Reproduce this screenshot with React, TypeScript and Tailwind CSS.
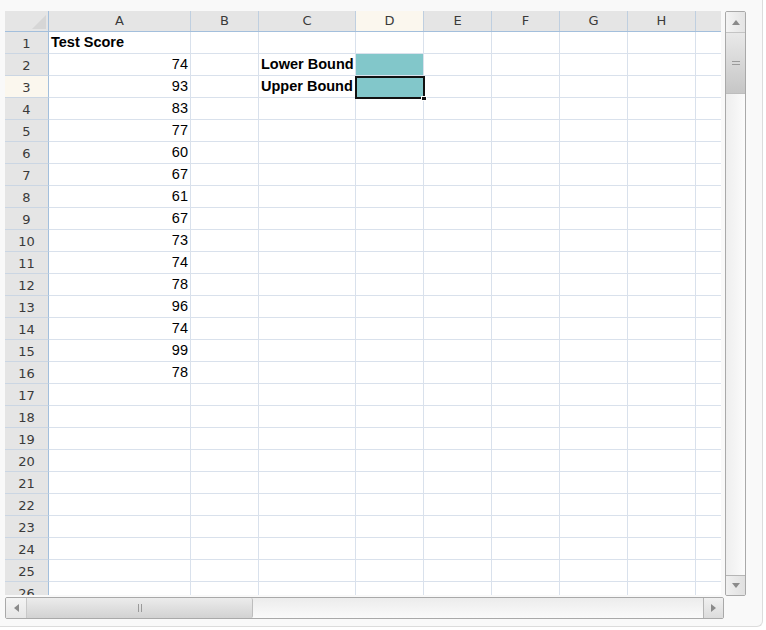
import React from "react";

const COLS = [
  { key: "A", w: "w-[142px]" },
  { key: "B", w: "w-[68px]" },
  { key: "C", w: "w-[97px]" },
  { key: "D", w: "w-[68px]" },
  { key: "E", w: "w-[68px]" },
  { key: "F", w: "w-[68px]" },
  { key: "G", w: "w-[68px]" },
  { key: "H", w: "w-[68px]" },
  { key: "I", w: "w-[68px]" },
];

const SCORES = [74, 93, 83, 77, 60, 67, 61, 67, 73, 74, 78, 96, 74, 99, 78];

type Cell = { text?: string; bold?: boolean; right?: boolean; fill?: boolean };

function cellFor(row: number, col: string): Cell {
  if (col === "A") {
    if (row === 1) return { text: "Test Score", bold: true };
    if (row >= 2 && row <= 16) return { text: String(SCORES[row - 2]), right: true };
  }
  if (col === "C") {
    if (row === 2) return { text: "Lower Bound", bold: true };
    if (row === 3) return { text: "Upper Bound", bold: true };
  }
  if (col === "D" && (row === 2 || row === 3)) return { fill: true };
  return {};
}

const ROWS = Array.from({ length: 26 }, (_, i) => i + 1);

function HeaderRow() {
  return (
    <div className="flex h-[21px] shrink-0 border-b border-[#a3bfdc]">
      <div className="relative w-[44px] shrink-0 border-r border-[#a3bfdc] bg-[#e5e5e5]">
        <svg className="absolute right-[2px] bottom-[2px]" width="14" height="14" viewBox="0 0 14 14">
          <path d="M14 0 L14 14 L0 14 Z" fill="#d6d6d6" />
        </svg>
      </div>
      {COLS.map((c) => (
        <div
          key={c.key}
          className={`${c.w} shrink-0 border-r border-[#bfcfe0] flex items-center justify-center text-[13px] text-[#3a3a3a] ${
            c.key === "D" ? "bg-[#fbf7ee]" : "bg-[#e5e5e5]"
          }`}
        >
          {c.key}
        </div>
      ))}
    </div>
  );
}

function GridRow({ row }: { row: number }) {
  return (
    <div className="flex h-[22px] shrink-0">
      <div
        className={`w-[44px] shrink-0 border-r border-b border-r-[#a3bfdc] border-b-[#cbd6e3] flex items-center justify-center pt-[2px] text-[13px] text-[#3a3a3a] ${
          row === 3 ? "bg-[#fbf7ee]" : "bg-[#e5e5e5]"
        }`}
      >
        {row}
      </div>
      {COLS.map((c) => {
        const cell = cellFor(row, c.key);
        return (
          <div
            key={c.key}
            className={`${c.w} shrink-0 border-r border-b border-[#d9e1ec] px-[2px] leading-[20px] text-[14.5px] text-black whitespace-nowrap overflow-hidden ${
              cell.fill ? "bg-[#82c7ca]" : "bg-white"
            } ${cell.right ? "text-right" : "text-left"} ${cell.bold ? "font-bold" : ""}`}
            style={{ fontFamily: '"Liberation Sans", Arial, sans-serif' }}
          >
            {cell.text}
          </div>
        );
      })}
    </div>
  );
}

function Arrow({ dir }: { dir: "up" | "down" | "left" | "right" }) {
  const d = {
    up: "M0 5 L4 0 L8 5 Z",
    down: "M0 0 L8 0 L4 5 Z",
    left: "M5 0 L5 8 L0 4 Z",
    right: "M0 0 L5 4 L0 8 Z",
  }[dir];
  const vertical = dir === "up" || dir === "down";
  return (
    <svg width={vertical ? 8 : 5} height={vertical ? 5 : 8} viewBox={vertical ? "0 0 8 5" : "0 0 5 8"}>
      <path d={d} fill="#8a8a8a" />
    </svg>
  );
}

function VScroll() {
  return (
    <div className="w-[21px] h-[585px] shrink-0 flex flex-col border border-[#a9a9a9] rounded-[2px] bg-gradient-to-r from-[#eeeeee] to-[#fbfbfb] overflow-hidden">
      <div className="h-[21px] shrink-0 flex items-center justify-center bg-gradient-to-r from-[#f4f4f4] to-[#e4e4e4] border-b border-[#c4c4c4]">
        <Arrow dir="up" />
      </div>
      <div className="h-[61px] shrink-0 flex flex-col items-center justify-center gap-[2px] bg-gradient-to-b from-[#e9e9e9] to-[#c6c6c6] border-b border-[#bdbdbd]">
        <div className="w-[8px] h-px bg-[#9a9a9a]" />
        <div className="w-[8px] h-px bg-[#9a9a9a]" />
      </div>
      <div className="flex-1" />
      <div className="h-[20px] shrink-0 flex items-center justify-center bg-gradient-to-r from-[#f0f0f0] to-[#e0e0e0] border-t border-[#b5b5b5]">
        <Arrow dir="down" />
      </div>
    </div>
  );
}

function HScroll() {
  return (
    <div className="mt-[1px] w-[719px] h-[22px] flex border border-[#a9a9a9] rounded-[2px] bg-gradient-to-b from-[#ececec] to-[#fafafa] overflow-hidden">
      <div className="w-[21px] shrink-0 flex items-center justify-center bg-gradient-to-b from-[#f4f4f4] to-[#e6e6e6] border-r border-[#c8c8c8]">
        <Arrow dir="left" />
      </div>
      <div className="w-[226px] shrink-0 flex items-center justify-center gap-[2px] bg-gradient-to-b from-[#ececec] to-[#d2d2d2] border-r border-[#bdbdbd] rounded-r-[2px]">
        <div className="w-px h-[8px] bg-[#9a9a9a]" />
        <div className="w-px h-[8px] bg-[#9a9a9a]" />
      </div>
      <div className="flex-1" />
      <div className="w-[20px] shrink-0 flex items-center justify-center bg-gradient-to-b from-[#f0f0f0] to-[#dcdcdc] border-l border-[#b5b5b5]">
        <Arrow dir="right" />
      </div>
    </div>
  );
}

export default function App() {
  return (
    <div className="w-[766px] h-[630px] bg-white overflow-hidden">
      <div
        className="w-[763px] h-[627px] bg-[#f9f9f9] border-r border-b border-[#dcdcdc] rounded-br-[6px] pt-[11px] pl-[5px]"
        style={{ fontFamily: '"DejaVu Sans", "Open Sans", sans-serif' }}
      >
        <div className="flex items-start gap-[4px]">
          <div className="relative w-[716px] h-[584px] shrink-0 overflow-hidden flex flex-col bg-white">
            <HeaderRow />
            {ROWS.map((r) => (
              <GridRow key={r} row={r} />
            ))}
            {/* active cell D3 */}
            <div className="absolute left-[350px] top-[65px] w-[70px] h-[23px] border-2 border-[#111111]" />
            <div className="absolute left-[416px] top-[85px] w-[6px] h-[5px] bg-[#111111] border border-white" />
          </div>
          <VScroll />
        </div>
        <HScroll />
      </div>
    </div>
  );
}
